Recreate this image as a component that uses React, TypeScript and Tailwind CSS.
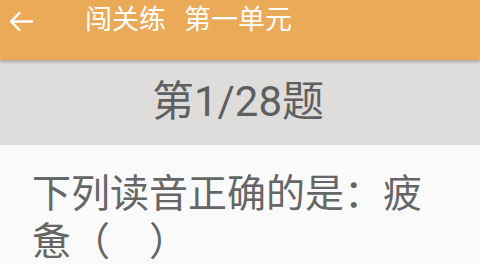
import { useState } from 'react';

const cjk = { fontFamily: 'Roboto, "Noto Sans CJK SC", sans-serif' };

function BackArrow() {
  return (
    <svg width="26" height="24" viewBox="0 0 26 24" fill="none">
      <path
        d="M24 11.5H3.5M11.5 3L3 11.5L11.5 20"
        stroke="white"
        strokeWidth="2.4"
        strokeLinecap="round"
        strokeLinejoin="round"
      />
    </svg>
  );
}

export default function App() {
  const [current] = useState(1);
  const total = 28;

  return (
    <div className="w-[480px] h-[265px] overflow-hidden bg-[#fafafa]" style={cjk}>
      {/* 顶部标题栏 */}
      <div className="relative z-10 h-[60px] bg-[#ebaa57] shadow-[0_2px_3px_rgba(0,0,0,0.25)]">
        <div className="flex items-center h-[41px]">
          <div className="w-[85px] pl-[8px] flex items-center pt-[3px]">
            <BackArrow />
          </div>
          <div className="flex gap-[18px] text-[27px] leading-none text-white">
            <span>闯关练</span>
            <span>第一单元</span>
          </div>
        </div>
      </div>

      {/* 题号 */}
      <div className="h-[86px] bg-[#dfdddc] flex items-center justify-center mt-[-1px]">
        <span className="text-[42px] leading-none text-[#5f5f5f] -translate-x-[2px]">
          第{current}/{total}题
        </span>
      </div>

      {/* 题目 */}
      <div className="pl-8 pr-8 pt-[25px] text-[39px] leading-[48px] text-[#666666]">
        下列读音正确的是：疲惫（　）
      </div>
    </div>
  );
}
